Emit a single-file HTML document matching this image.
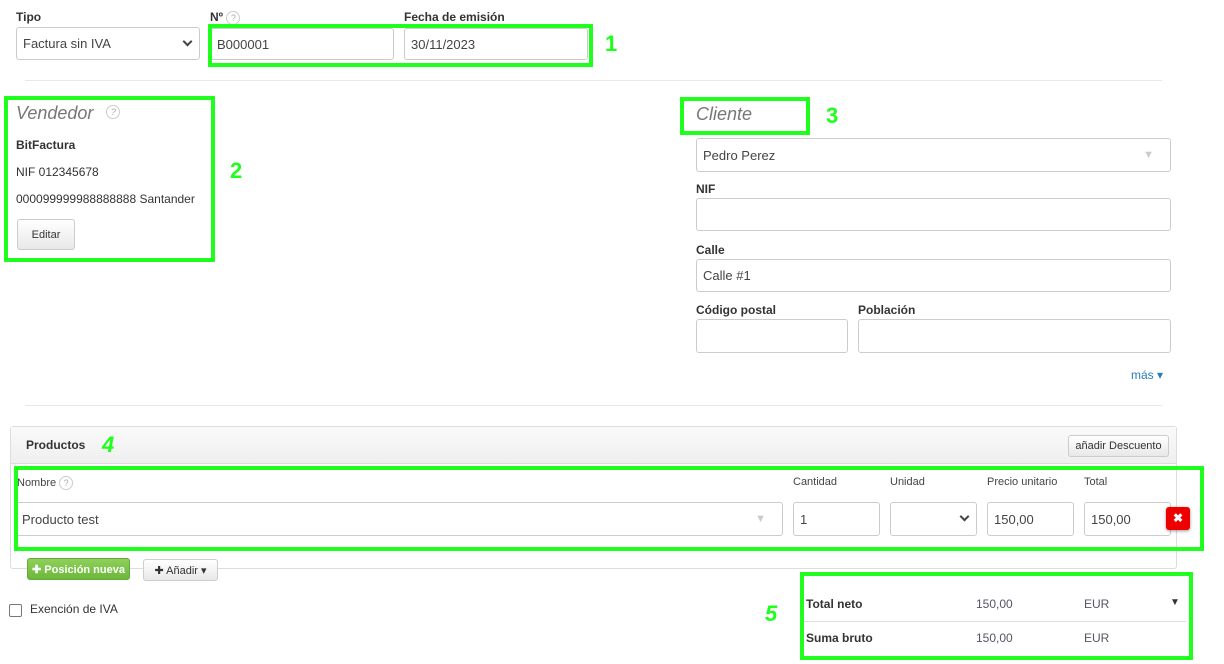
<!DOCTYPE html>
<html><head><meta charset="utf-8"><style>
*{box-sizing:border-box}
body{margin:0;width:1224px;height:664px;background:#fff;font-family:"Liberation Sans",Arial,sans-serif;font-size:12px;color:#333;position:relative;overflow:hidden}
.a{position:absolute}
.lbl{font-weight:bold;font-size:12px;color:#333}
.inp{position:absolute;border:1px solid #ccc;border-radius:3px;background:#fff;font-size:13px;color:#444;padding-left:6px;display:flex;align-items:center}
.g{position:absolute;border:4px solid #1eff1e}
.num{position:absolute;color:#1eff1e;font-size:22px;font-family:"Liberation Sans",sans-serif;font-weight:bold}
.q{display:inline-block;width:14px;height:14px;border:1px solid #ccc;border-radius:50%;font-size:9px;color:#aaa;text-align:center;line-height:12px;vertical-align:middle;font-weight:normal}
.hr{position:absolute;height:1px;background:#e8e8e8}
.btn{position:absolute;border:1px solid #ccc;border-radius:3px;background:linear-gradient(#fff,#e8e8e8);font-size:11px;color:#333;display:flex;align-items:center;justify-content:center}
.chev{position:absolute;right:8px;top:50%;margin-top:-5px;width:7px;height:7px;border-right:2px solid #444;border-bottom:2px solid #444;transform:rotate(45deg)}
.sm{font-size:11px;color:#444}
</style></head><body>
<div class="a lbl" style="left:16px;top:10px">Tipo</div>
<div class="inp" style="left:16px;top:27px;width:184px;height:33px">Factura sin IVA<div class="chev" style="margin-top:-6px"></div></div>
<div class="a lbl" style="left:210px;top:10px">Nº <span class="q">?</span></div>
<div class="inp" style="left:210px;top:28px;width:184px;height:32px">B000001</div>
<div class="a lbl" style="left:404px;top:10px">Fecha de emisión</div>
<div class="inp" style="left:404px;top:28px;width:184px;height:32px">30/11/2023</div>
<div class="g" style="left:208px;top:24px;width:385px;height:43px"></div>
<div class="num" style="left:605px;top:31px">1</div>

<div class="hr" style="left:25px;top:80px;width:1137px"></div>

<div class="a" style="left:16px;top:103px;font-size:18px;font-style:italic;color:#777">Vendedor <span class="q" style="margin-left:8px;margin-top:-4px">?</span></div>
<div class="a" style="left:16px;top:138px;font-weight:bold">BitFactura</div>
<div class="a" style="left:16px;top:165px">NIF 012345678</div>
<div class="a" style="left:16px;top:192px">000099999988888888 Santander</div>
<div class="btn" style="left:17px;top:219px;width:58px;height:31px">Editar</div>
<div class="g" style="left:4px;top:96px;width:211px;height:166px"></div>
<div class="num" style="left:230px;top:158px">2</div>

<div class="a" style="left:696px;top:104px;font-size:18px;font-style:italic;color:#777">Cliente</div>
<div class="g" style="left:680px;top:97px;width:130px;height:38px"></div>
<div class="num" style="left:826px;top:103px">3</div>
<div class="inp" style="left:696px;top:138px;width:475px;height:34px">Pedro Perez<span style="position:absolute;right:16px;color:#ccc;font-size:11px">▼</span></div>
<div class="a lbl" style="left:696px;top:182px">NIF</div>
<div class="inp" style="left:696px;top:198px;width:475px;height:33px"></div>
<div class="a lbl" style="left:696px;top:243px">Calle</div>
<div class="inp" style="left:696px;top:259px;width:475px;height:33px">Calle #1</div>
<div class="a lbl" style="left:696px;top:303px">Código postal</div>
<div class="inp" style="left:696px;top:319px;width:152px;height:34px"></div>
<div class="a lbl" style="left:858px;top:303px">Población</div>
<div class="inp" style="left:858px;top:319px;width:313px;height:34px"></div>
<div class="a" style="left:1131px;top:368px;color:#2a7ac0">más ▾</div>

<div class="hr" style="left:25px;top:405px;width:1137px"></div>

<div class="a" style="left:10px;top:426px;width:1167px;height:143px;border:1px solid #ddd;border-radius:3px"></div>
<div class="a" style="left:11px;top:427px;width:1165px;height:37px;background:linear-gradient(#fafafa,#efefef);border-bottom:1px solid #ddd"></div>
<div class="a lbl" style="left:26px;top:438px">Productos</div>
<div class="num" style="left:102px;top:432px;font-style:italic">4</div>
<div class="btn" style="left:1068px;top:435px;width:101px;height:22px">añadir Descuento</div>

<div class="a sm" style="left:17px;top:476px">Nombre <span class="q">?</span></div>
<div class="a sm" style="left:793px;top:476px">Cantidad</div>
<div class="a sm" style="left:890px;top:476px">Unidad</div>
<div class="a sm" style="left:987px;top:476px">Precio unitario</div>
<div class="a sm" style="left:1084px;top:476px">Total</div>
<div class="inp" style="left:14px;top:502px;width:769px;height:34px;padding-left:7px">Producto test<span style="position:absolute;right:16px;color:#ccc;font-size:11px">▼</span></div>
<div class="inp" style="left:793px;top:502px;width:87px;height:34px">1</div>
<div class="inp" style="left:890px;top:502px;width:87px;height:34px"><div class="chev" style="margin-top:-6px"></div></div>
<div class="inp" style="left:987px;top:502px;width:87px;height:34px">150,00</div>
<div class="inp" style="left:1084px;top:502px;width:87px;height:34px">150,00</div>
<div class="a" style="left:1166px;top:507px;width:24px;height:23px;background:#e00;border-radius:3px;color:#fff;font-weight:bold;text-align:center;line-height:23px;box-shadow:0 1px 3px rgba(0,0,0,.4)">✖</div>
<div class="g" style="left:14px;top:466px;width:1190px;height:85px"></div>

<div class="a" style="left:27px;top:558px;width:103px;height:22px;border-radius:3px;background:linear-gradient(#8fd05a,#6bb83a);border:1px solid #69a93c;color:#fff;font-size:11px;font-weight:bold;display:flex;align-items:center;justify-content:center">✚ Posición nueva</div>
<div class="btn" style="left:143px;top:559px;width:75px;height:22px">✚ Añadir ▾</div>

<div class="a" style="left:9px;top:604px;width:13px;height:13px;border:1px solid #777;border-radius:2px"></div>
<div class="a" style="left:30px;top:602px;font-size:12px">Exención de IVA</div>

<div class="num" style="left:765px;top:601px;font-style:italic">5</div>
<div class="a lbl" style="left:806px;top:597px">Total neto</div>
<div class="a" style="left:976px;top:597px;color:#556">150,00</div>
<div class="a" style="left:1084px;top:597px;color:#556">EUR</div>
<div class="a" style="left:1170px;top:597px;font-size:10px">▼</div>
<div class="hr" style="left:800px;top:621px;width:386px;background:#ddd"></div>
<div class="a lbl" style="left:806px;top:631px">Suma bruto</div>
<div class="a" style="left:976px;top:631px;color:#556">150,00</div>
<div class="a" style="left:1084px;top:631px;color:#556">EUR</div>
<div class="g" style="left:800px;top:572px;width:393px;height:88px"></div>
</body></html>
